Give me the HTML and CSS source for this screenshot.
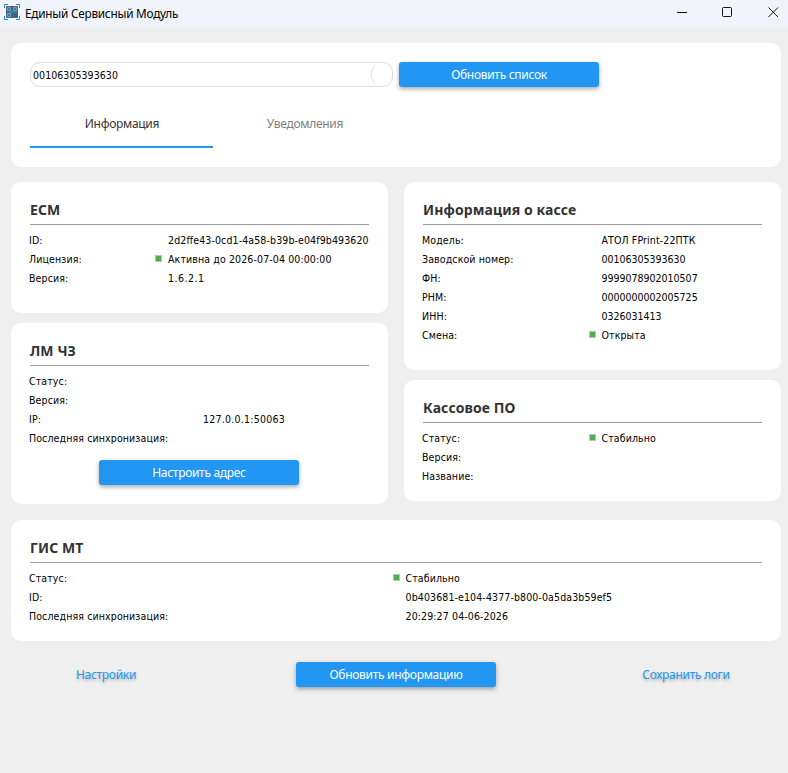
FILE: index.html
```html
<!DOCTYPE html>
<html lang="ru">
<head>
<meta charset="utf-8">
<title>Единый Сервисный Модуль</title>
<link rel="stylesheet" href="styles.css">
</head>
<body>
<header class="titlebar">
  <svg class="app-icon" width="16" height="16" viewBox="0 0 16 16">
    <path d="M2 2h12v12H2z" fill="#4f6a84"/>
    <path d="M3.500 3.500h3v3h-3zM9.500 3.500h3v3h-3zM3.500 9.500h3v3h-3z" fill="#55708c" stroke="#8299ad"/>
    <path d="M9 10h2v3M13 9v4M2 7.500h3M8 2v4M8 10v4" fill="none" stroke="#3b546c"/>
    <path d="M5 7h6v2H5z" fill="#1687dc"/>
    <path d="M.5 4V.5H4M12 .5h3.500V4M15.500 12v3.500H12M4 15.500H.5V12" fill="none" stroke="#2387d5"/>
  </svg>
  <h1 class="app-name">Единый Сервисный Модуль</h1>
  <svg class="controls" width="102" height="12" viewBox="0 0 102 12" fill="none" stroke="#111">
    <path d="M0 6.500h10"/>
    <rect x="45.500" y="1.500" width="9" height="9" rx="1"/>
    <path d="M91.500 1.500l9.500 9.500M101 1.500L91.500 11"/>
  </svg>
</header>
<main class="page">
  <section class="card top-card">
    <div class="toolbar">
      <div class="select"><span>00106305393630</span><svg class="drop" width="21" height="23" viewBox="0 0 21 23"><path d="M4.500 2.500C.8 6 .5 8 .5 11.500S.8 17 4.500 20.500" fill="none" stroke="#dcdcdc"/></svg></div>
      <button class="button">Обновить список</button>
    </div>
    <nav class="tabs">
      <a class="tab active">Информация</a>
      <a class="tab">Уведомления</a>
    </nav>
  </section>
  <div class="columns">
    <div class="column">
      <section class="card esm">
        <h2>ЕСМ</h2>
        <dl>
          <dt>ID:</dt><dd>2d2ffe43-0cd1-4a58-b39b-e04f9b493620</dd>
          <dt>Лицензия:</dt><dd class="ok">Активна до 2026-07-04 00:00:00</dd>
          <dt>Версия:</dt><dd class="wide">1.6.2.1</dd>
        </dl>
      </section>
      <section class="card lm">
        <h2>ЛМ ЧЗ</h2>
        <dl>
          <dt>Статус:</dt><dd></dd>
          <dt>Версия:</dt><dd></dd>
          <dt>IP:</dt><dd class="address-value">127.0.0.1:50063</dd>
          <dt>Последняя синхронизация:</dt><dd></dd>
        </dl>
        <button class="button address">Настроить адрес</button>
      </section>
    </div>
    <div class="column">
      <section class="card kkt">
        <h2>Информация о кассе</h2>
        <dl>
          <dt>Модель:</dt><dd>АТОЛ FPrint-22ПТК</dd>
          <dt>Заводской номер:</dt><dd class="digits">00106305393630</dd>
          <dt>ФН:</dt><dd class="digits">9999078902010507</dd>
          <dt>РНМ:</dt><dd class="digits">0000000002005725</dd>
          <dt>ИНН:</dt><dd class="digits">0326031413</dd>
          <dt>Смена:</dt><dd class="ok">Открыта</dd>
        </dl>
      </section>
      <section class="card soft">
        <h2>Кассовое ПО</h2>
        <dl>
          <dt>Статус:</dt><dd class="ok">Стабильно</dd>
          <dt>Версия:</dt><dd></dd>
          <dt>Название:</dt><dd></dd>
        </dl>
      </section>
    </div>
  </div>
  <section class="card gis">
    <h2>ГИС МТ</h2>
    <dl>
      <dt>Статус:</dt><dd class="ok">Стабильно</dd>
      <dt>ID:</dt><dd>0b403681-e104-4377-b800-0a5da3b59ef5</dd>
      <dt>Последняя синхронизация:</dt><dd>20:29:27 04-06-2026</dd>
    </dl>
  </section>
  <footer class="footer">
    <a class="link">Настройки</a>
    <button class="button">Обновить информацию</button>
    <a class="link">Сохранить логи</a>
  </footer>
</main>
</body>
</html>
```
FILE: styles.css
```css
*, *::before { box-sizing: border-box; }
body {
  margin: 0;
  height: 773px;
  overflow: hidden;
  background: #efefef;
  color: #000;
  font-family: "DejaVu Sans Condensed", "DejaVu Sans", sans-serif;
  font-size: 10.5px;
}
.titlebar {
  display: flex;
  align-items: center;
  height: 28px;
  padding: 0 9px 4px 4px;
  background: #f0f3f9;
}
.app-icon { flex: none; }
.app-name {
  margin: 1px auto 0 5px;
  font: 400 11.75px/18px "Noto Sans", sans-serif;
  letter-spacing: -.22px;
  white-space: nowrap;
}
.controls { flex: none; }
.page { padding: 15px 7px 0 11px; }
.card {
  padding: 18px 19px 0;
  border-radius: 10px;
  background: #fff;
}
.top-card { height: 124px; padding-top: 19px; }
.toolbar { display: flex; gap: 6px; }
.select {
  display: flex;
  justify-content: space-between;
  align-items: center;
  width: 363px;
  height: 25px;
  padding-left: 2px;
  border: 1px solid #dcdcdc;
  border-radius: 10px;
  letter-spacing: .06px;
}
.drop { flex: none; }
.button, .tab, .link {
  font-family: "Noto Sans", sans-serif;
  font-size: 12px;
  font-weight: 400;
  letter-spacing: -.3px;
  white-space: nowrap;
}
.button {
  width: 200px;
  height: 25px;
  padding: 0;
  border: 0;
  border-radius: 3px;
  background: #2196f3;
  box-shadow: 0 2px 4px rgba(0, 0, 0, .35);
  color: #fff;
  line-height: 25px;
}
.tabs { display: flex; margin-top: 13px; }
.tab {
  width: 183px;
  height: 48px;
  padding-left: 1px;
  border-bottom: 2px solid transparent;
  color: #808080;
  line-height: 48px;
  text-align: center;
}
.active { border-color: #2196f3; color: #333; }
.columns { display: flex; gap: 16px; margin-top: 15px; }
.column { display: flex; flex-direction: column; gap: 10px; width: 377px; }
.esm { height: 131px; }
.lm { height: 181px; }
.kkt { height: 188px; }
.soft { height: 121px; }
.gis { height: 121px; margin-top: 16px; }
h2 {
  height: 25px;
  margin: 0;
  border-bottom: 1px solid #9c9c9c;
  color: #333;
  font: 700 14px/20px "Noto Sans", sans-serif;
  letter-spacing: .1px;
}
dl {
  display: grid;
  grid-template-columns: 139px 1fr;
  grid-auto-rows: 19px;
  margin: 6px 0 0 -1px;
  line-height: 19px;
  letter-spacing: .12px;
  white-space: nowrap;
}
.lm dl { grid-template-columns: 174px 1fr; }
.kkt dl, .soft dl { grid-template-columns: 179.5px 1fr; }
.gis dl { grid-template-columns: 376.5px 1fr; }
dt, dd { margin: 0; }
.digits { letter-spacing: 0; }
.wide { letter-spacing: .5px; }
.address-value { letter-spacing: .25px; }
.ok::before {
  content: "";
  display: inline-block;
  width: 7px;
  height: 7px;
  margin: 0 6px 1px -13px;
  border: 1px solid #c0c0c0;
  background: #4caf50;
}
.address { display: block; margin: 12px auto 0 69px; }
.footer {
  display: grid;
  grid-template-columns: 190px 390px 190px;
  justify-items: center;
  margin-top: 21px;
}
.link {
  color: #2196f3;
  line-height: 25px;
  text-shadow: 0 2px 3px rgba(0, 0, 0, .25);
}
```
